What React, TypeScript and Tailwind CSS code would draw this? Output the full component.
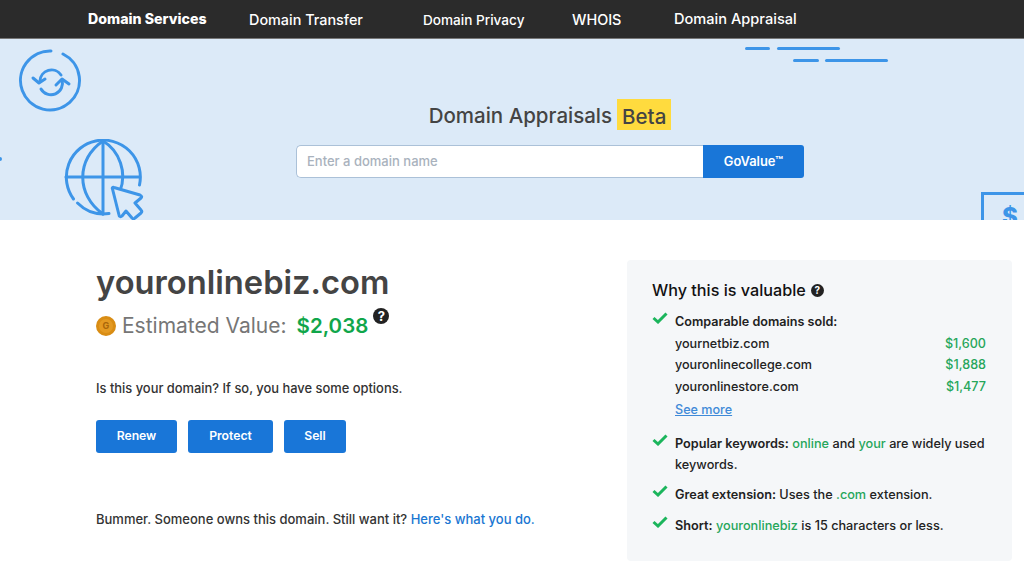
import React from "react";

const Check = () => (
  <svg width="16" height="12" viewBox="0 0 16 12" className="absolute left-0 top-[1px]">
    <path d="M1.5 6 L6 10 L14.5 1.5" fill="none" stroke="#1bb55c" strokeWidth="3" />
  </svg>
);

const Help = ({ size }: { size: number }) => (
  <span
    className="inline-flex items-center justify-center rounded-full bg-[#222222] text-white font-bold"
    style={{ width: size, height: size, fontSize: size - 3, lineHeight: 1 }}
  >
    ?
  </span>
);

const Blue = "#3d95e8";

const SyncIcon = () => (
  <svg width="64" height="64" viewBox="0 0 64 64" fill="none" stroke={Blue} strokeWidth="3" strokeLinecap="round" strokeLinejoin="round">
    <path d="M32 3 A29.5 29.5 0 1 0 44 6" />
    <path d="M21 33 A11.5 11.5 0 0 1 42 27" />
    <path d="M14 30 L20 35 L26 31" />
    <path d="M43 32 A11.5 11.5 0 0 1 22 41" />
    <path d="M37 37 L43 31 L50 36" />
  </svg>
);

const GlobeIcon = () => (
  <svg width="82" height="84" viewBox="0 0 82 84" fill="none" stroke={Blue} strokeWidth="3" strokeLinecap="round" strokeLinejoin="round">
    <path d="M9.5 60 A37 37 0 1 1 75.5 46" />
    <path d="M13.5 64 A37 37 0 0 0 45 74.5" />
    <path d="M39 2 C12 20 12 56 39 75" />
    <path d="M39 2 C56 12 63 34 56 52" />
    <path d="M39 2 V75" />
    <path d="M2 38 H75" />
    <path d="M48.5 50 C48 49 48.5 48 50 48.5 L76 56 C78 57 78 58 77 59 L71 64 L77 71 C78 72 78 73 77 74 L71 79 C70 80 69 80 68 79 L62 72 L58 77 C57 78 55 78 55 76 Z" fill="#dceaf8" />
  </svg>
);

const Nav = () => (
  <nav className="h-[39px] shrink-0 bg-[#2b2b2b] border-b border-[#777777] flex items-center pl-[88px] text-white">
    <span className="font-extrabold text-[14.2px] w-[161px] -mt-[1px]">Domain Services</span>
    <span className="font-medium text-[14.4px] w-[174px] mt-[2px]">Domain Transfer</span>
    <span className="font-medium text-[13.6px] w-[149px] mt-[2px]">Domain Privacy</span>
    <span className="font-medium text-[14.4px] w-[102px] mt-[2px]">WHOIS</span>
    <span className="font-medium text-[14.6px] mt-[2px]">Domain Appraisal</span>
  </nav>
);

const Hero = () => (
  <section className="relative h-[181px] shrink-0 overflow-hidden bg-[#dceaf8]">
    <div className="absolute left-[19px] top-[9px]"><SyncIcon /></div>
    <div className="absolute left-[64px] top-[100px]"><GlobeIcon /></div>
    <div className="absolute left-0 top-[118px] w-[2px] h-[4px] rounded-r-full bg-[#3d95e8]" />
    <div className="absolute left-[745px] top-[8px] w-[25px] h-[3px] rounded-full bg-[#3d95e8]" />
    <div className="absolute left-[777px] top-[8px] w-[63px] h-[3px] rounded-full bg-[#3d95e8]" />
    <div className="absolute left-[793px] top-[20px] w-[26px] h-[3px] rounded-full bg-[#3d95e8]" />
    <div className="absolute left-[825px] top-[20px] w-[63px] h-[3px] rounded-full bg-[#3d95e8]" />
    <div className="absolute left-[981px] top-[153px] w-[60px] h-[40px] border-[3px] border-[#3d95e8] pl-[18px] text-[#3d95e8] font-extrabold text-[24px] leading-[44px]">$</div>
    <div className="flex flex-col items-center pl-[76px] pt-[60px]">
      <h1 className="h-[31px] flex items-center text-[20.5px] font-medium text-[#444444]">
        <span className="pt-[3px]">Domain Appraisals</span>
        <span className="ml-[5px] px-[5px] h-[31px] leading-[36px] bg-[#ffdb3e]">Beta</span>
      </h1>
      <div className="mt-[15px] flex w-[508px] h-[33px]">
        <div className="flex-1 bg-white border border-[#abc1d8] border-r-0 rounded-l-[5px] pl-[10px] flex items-center text-[13px] font-medium text-[#a9b2bd]">
          Enter a domain name
        </div>
        <button className="w-[101px] bg-[#1976d8] text-white text-[12.9px] font-semibold rounded-r-[3px]">GoValue™</button>
      </div>
    </div>
  </section>
);

const Main = () => (
  <main className="flex-1 flex bg-white pl-[96px] pt-[40px]">
    <div className="w-[531px] shrink-0">
      <h2 className="text-[32.7px] leading-[46px] font-semibold text-[#444444] -mt-[1px]">youronlinebiz.com</h2>
      <div className="flex items-center h-[32px] mt-[5px]">
        <span className="w-[20px] h-[20px] rounded-full bg-[#e49a22] border-[3px] border-[#d98d14] flex items-center justify-center text-[9px] font-bold text-[#a9660a] shrink-0">G</span>
        <span className="ml-[6px] text-[21px] text-[#767676]">Estimated Value:</span>
        <span className="ml-[10px] text-[20.5px] font-semibold text-[#10a64a]">$2,038</span>
        <span className="ml-[5px] -mt-[20px] flex"><Help size={16} /></span>
      </div>
      <p className="mt-[38px] text-[12.9px] leading-[18px] font-medium text-[#333333]">Is this your domain? If so, you have some options.</p>
      <div className="mt-[22px] flex gap-[11px]">
        <button className="w-[81px] h-[33px] rounded-[3px] bg-[#1976d8] text-white text-[12.2px] font-semibold">Renew</button>
        <button className="w-[85px] h-[33px] rounded-[3px] bg-[#1976d8] text-white text-[12.2px] font-semibold">Protect</button>
        <button className="w-[62px] h-[33px] rounded-[3px] bg-[#1976d8] text-white text-[12.2px] font-semibold">Sell</button>
      </div>
      <p className="mt-[57px] text-[13px] leading-[18px] font-medium text-[#333333]">
        Bummer. Someone owns this domain. Still want it? <a className="text-[#1976d2]">Here's what you do.</a>
      </p>
    </div>
    <aside className="w-[385px] h-[301px] shrink-0 rounded-[4px] bg-[#f5f7f9] pl-[25px] pr-[26px] pt-[19px] text-[#222222]">
      <h3 className="text-[16.2px] leading-[22px] font-medium text-[#111111] flex items-center gap-[5px]">Why this is valuable <Help size={13} /></h3>
      <div className="mt-[10px] pl-[23px] relative text-[12.6px] leading-[21.5px] font-medium">
        <Check />
        <div className="font-semibold">Comparable domains sold:</div>
        <div className="flex justify-between"><span>yournetbiz.com</span><span className="text-[#26a65b]">$1,600</span></div>
        <div className="flex justify-between"><span>youronlinecollege.com</span><span className="text-[#26a65b]">$1,888</span></div>
        <div className="flex justify-between"><span>youronlinestore.com</span><span className="text-[#26a65b]">$1,477</span></div>
        <a className="block mt-[2px] text-[#3f8ad8] underline">See more</a>
      </div>
      <div className="mt-[12px] pl-[23px] relative text-[12.7px] leading-[21.5px] font-medium">
        <Check />
        <span className="font-semibold">Popular keywords:</span> <span className="text-[#26a65b]">online</span> and <span className="text-[#26a65b]">your</span> are widely used<br />keywords.
      </div>
      <div className="mt-[8px] pl-[23px] relative text-[12.7px] leading-[21.5px] font-medium">
        <Check />
        <span className="font-semibold">Great extension:</span> Uses the <span className="text-[#26a65b]">.com</span> extension.
      </div>
      <div className="mt-[10px] pl-[23px] relative text-[12.7px] leading-[21.5px] font-medium">
        <Check />
        <span className="font-semibold">Short:</span> <span className="text-[#26a65b]">youronlinebiz</span> is 15 characters or less.
      </div>
    </aside>
  </main>
);

export default function App() {
  return (
    <div className="w-[1024px] h-[576px] overflow-hidden flex flex-col bg-white" style={{ fontFamily: 'Inter, "Noto Sans", sans-serif' }}>
      <Nav />
      <Hero />
      <Main />
    </div>
  );
}
